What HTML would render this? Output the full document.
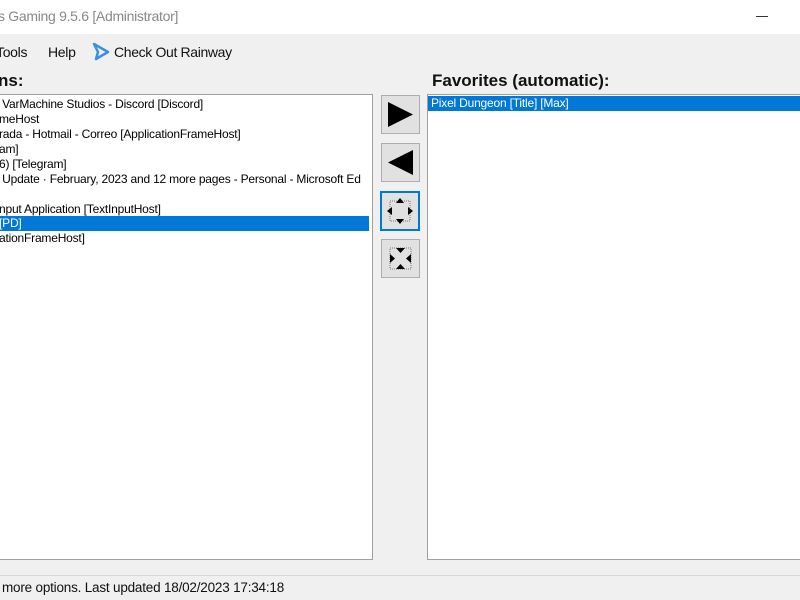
<!DOCTYPE html>
<html><head><style>
body{margin:0;width:800px;height:600px;background:#f0f0f0;font-family:"Liberation Sans",Arial,sans-serif;position:relative;overflow:hidden}
.a{position:absolute;white-space:nowrap}
.title{left:0;top:0;width:800px;height:34px;background:#fff}
.list{background:#fff;border:1px solid #a0a0a0;overflow:hidden}
.row{position:absolute;left:0;height:15px;line-height:15px;font-size:12px;color:#000;white-space:nowrap;letter-spacing:-0.2px}
.sel{background:#0078d7;color:#fff}
.btn{position:absolute;left:381px;width:37px;height:37px;background:#e1e1e1;border:1px solid #adadad}
</style></head><body>
<div class="a title"></div>
<div class="a" style="left:-2px;top:8px;font-size:14px;color:#888;letter-spacing:-0.3px">s Gaming 9.5.6 [Administrator]</div>
<div class="a" style="left:756px;top:16px;width:12px;height:1px;background:#333"></div>
<div class="a" style="left:-4px;top:44px;font-size:14px;color:#111;letter-spacing:-0.3px">Tools</div>
<div class="a" style="left:48px;top:44px;font-size:14px;color:#111;letter-spacing:-0.3px">Help</div>
<svg class="a" style="left:91px;top:42px" width="20" height="20" viewBox="0 0 20 20"><path d="M3 2 L17 10 L5 17 L7 10 Z" fill="none" stroke="#3a8ee6" stroke-width="2.5" stroke-linejoin="round"/></svg>
<div class="a" style="left:114px;top:44px;font-size:14px;color:#111;letter-spacing:-0.35px">Check Out Rainway</div>
<div class="a" style="left:-2px;top:71px;font-size:17px;font-weight:bold;color:#111">ns:</div>
<div class="a" style="left:432px;top:71px;font-size:17px;font-weight:bold;color:#111">Favorites (automatic):</div>
<div class="a list" style="left:-2px;top:94px;width:373px;height:464px">
<div class="row" style="top:2px">&nbsp;VarMachine Studios - Discord [Discord]</div>
<div class="row" style="top:17px">meHost</div>
<div class="row" style="top:32px">rada - Hotmail - Correo [ApplicationFrameHost]</div>
<div class="row" style="top:47px">am]</div>
<div class="row" style="top:62px">6) [Telegram]</div>
<div class="row" style="top:77px">&nbsp;Update · February, 2023 and 12 more pages - Personal - Microsoft Ed</div>
<div class="row" style="top:107px">nput Application [TextInputHost]</div>
<div class="row sel" style="top:121px;width:370px">[PD]</div>
<div class="row" style="top:136px">ationFrameHost]</div>
</div>
<div class="a list" style="left:427px;top:94px;width:380px;height:464px">
<div class="row sel" style="top:1px;width:380px;padding-left:3px">Pixel Dungeon [Title] [Max]</div>
</div>
<div class="btn" style="top:95px"><svg width="37" height="37"><path d="M6 6 L31 18.5 L6 31Z" fill="#000"/></svg></div>
<div class="btn" style="top:143px"><svg width="37" height="37"><path d="M31 6 L6 18.5 L31 31Z" fill="#000"/></svg></div>
<div class="btn" style="top:191px;border:2px solid #0078d7;left:380px;width:36px;height:36px"><svg width="36" height="36"><rect x="8" y="8" width="20" height="20" fill="none" stroke="#777" stroke-dasharray="1 1"/><path d="M18 5 L22 10 L14 10Z M18 31 L22 26 L14 26Z M5 18 L10 14 L10 22Z M31 18 L26 14 L26 22Z" fill="#000"/></svg></div>
<div class="btn" style="top:239px"><svg width="37" height="37"><rect x="8" y="8" width="21" height="21" fill="none" stroke="#777" stroke-dasharray="1 1"/><path d="M18.5 13 L14 8 L23 8Z M18.5 24 L14 29 L23 29Z M13 18.5 L8 14 L8 23Z M24 18.5 L29 14 L29 23Z" fill="#000"/></svg></div>
<div class="a" style="left:0;top:575px;width:800px;height:1px;background:#d8d8d8"></div>
<div class="a" style="left:2px;top:580px;font-size:13.5px;color:#111;letter-spacing:-0.2px">more options. Last updated 18/02/2023 17:34:18</div>
</body></html>
